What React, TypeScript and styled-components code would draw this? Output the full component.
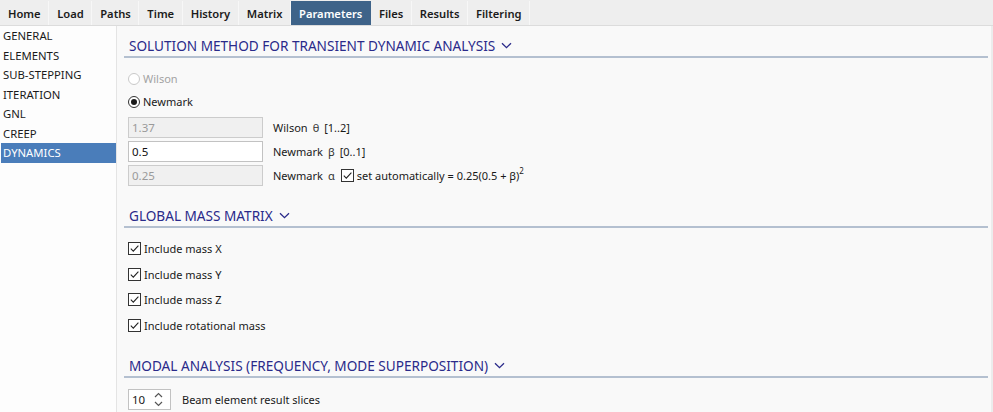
import React from "react";
import styled, { createGlobalStyle, css } from "styled-components";

const Global = createGlobalStyle`
  html, body { margin: 0; padding: 0; background: #f8f8f8; }
  body { font-family: "Noto Sans", "Open Sans", sans-serif; font-size: 11px; color: #1a1a1a; }
  * { box-sizing: border-box; }
`;

const Frame = styled.div`
  width: 993px;
  height: 412px;
  display: flex;
  flex-direction: column;
  overflow: hidden;
  background: #f8f8f8;
`;

const TabBar = styled.div`
  height: 26px;
  display: flex;
  align-items: stretch;
  background: #eeeeee;
  border-bottom: 1px solid #dcdcdc;
  padding-top: 1px;
`;

const Tab = styled.div<{ $active?: boolean }>`
  display: flex;
  align-items: center;
  padding: 0 7.5px 0 8px;
  font-weight: 600;
  font-size: 11.2px;
  color: #1b1b1b;
  border-right: 1px solid #f7f7f7;
  ${(p) =>
    p.$active &&
    css`
      background: #3e6389;
      color: #ffffff;
      border-right-color: #3e6389;
    `}
`;

const Body = styled.div`
  flex: 1;
  display: flex;
  min-height: 0;
`;

const Sidebar = styled.div`
  width: 117px;
  background: #fdfdfd;
  border-right: 1px solid #e4e4e4;
  display: flex;
  flex-direction: column;
`;

const NavItem = styled.div<{ $active?: boolean }>`
  height: 19.5px;
  display: flex;
  align-items: center;
  padding-left: 2px;
  margin-left: 1px;
  font-size: 11.3px;
  color: #1a1a1a;
  ${(p) =>
    p.$active &&
    css`
      background: #4a7dba;
      color: #ffffff;
    `}
`;

const Content = styled.div`
  flex: 1;
  padding: 0 3px 0 7px;
  background: #f9f9f9;
  border-right: 2px solid #ececec;
`;

const SectionHeader = styled.div<{ $top: number }>`
  margin-top: ${(p) => p.$top}px;
  height: 24px;
  display: flex;
  align-items: center;
  gap: 6px;
  padding-left: 5px;
  border-bottom: 2px solid #b4c0d0;
  color: #2a2a8a;
  font-size: 13.6px;
`;

const SectionBody = styled.div<{ $top: number }>`
  padding-left: 4px;
  padding-top: ${(p) => p.$top}px;
  display: flex;
  flex-direction: column;
`;

const OptionRow = styled.div<{ $h: number; $disabled?: boolean }>`
  height: ${(p) => p.$h}px;
  display: flex;
  align-items: center;
  gap: 3px;
  color: ${(p) => (p.$disabled ? "#a3a3a3" : "#1a1a1a")};
`;

const Radio = styled.span<{ $checked?: boolean; $disabled?: boolean }>`
  width: 12px;
  height: 12px;
  border-radius: 50%;
  border: 1px solid ${(p) => (p.$disabled ? "#c9c9c9" : "#333333")};
  background: #ffffff;
  display: inline-flex;
  align-items: center;
  justify-content: center;
  &::after {
    content: "";
    width: 6px;
    height: 6px;
    border-radius: 50%;
    background: ${(p) => (p.$checked ? "#1a1a1a" : "transparent")};
  }
`;

const Fields = styled.div`
  margin-top: 4px;
  display: flex;
  flex-direction: column;
  gap: 3px;
`;

const FieldRow = styled.div`
  display: flex;
  align-items: center;
  height: 21px;
`;

const TextBox = styled.div<{ $disabled?: boolean }>`
  width: 135px;
  height: 21px;
  margin-right: 10px;
  display: flex;
  align-items: center;
  padding-left: 3px;
  font-size: 11.5px;
  border: 1px solid ${(p) => (p.$disabled ? "#cccccc" : "#c2c2c2")};
  background: ${(p) => (p.$disabled ? "#f0f0f0" : "#ffffff")};
  color: ${(p) => (p.$disabled ? "#9a9a9a" : "#111111")};
`;

const Label = styled.span`
  color: #1a1a1a;
  display: inline-flex;
  align-items: center;
  white-space: nowrap;
`;

const Greek = styled.span`
  font-size: 11px;
  margin: 0 5px 0 5px;
  color: #333;
`;

const Sup = styled.sup`
  font-size: 8px;
  vertical-align: 6px;
  line-height: 0;
`;

const CheckBoxBox = styled.span`
  width: 13px;
  height: 13px;
  border: 1px solid #333333;
  background: #ffffff;
  display: inline-flex;
  align-items: center;
  justify-content: center;
  flex: none;
`;

const InlineCheck = styled.span`
  display: inline-flex;
  align-items: center;
  gap: 3px;
  margin-left: 1px;
`;

const CheckRow = styled.div`
  height: 25.5px;
  display: flex;
  align-items: center;
  gap: 3px;
`;

const SpinRow = styled.div`
  display: flex;
  align-items: center;
  gap: 11px;
`;

const Spinner = styled.div`
  width: 43px;
  height: 21px;
  border: 1px solid #c2c2c2;
  background: #ffffff;
  display: flex;
  align-items: center;
  justify-content: space-between;
  padding: 0 7px 0 3px;
  font-size: 11.5px;
`;

const SpinArrows = styled.div`
  display: flex;
  flex-direction: column;
  gap: 3px;
`;

const Chevron = () => (
  <svg width="11" height="7" viewBox="0 0 11 7">
    <path d="M1 1.2 L5.5 5.7 L10 1.2" fill="none" stroke="#2a2a8a" strokeWidth="1.3" />
  </svg>
);

const Check = () => (
  <CheckBoxBox>
    <svg width="11" height="11" viewBox="0 0 11 11">
      <path d="M1.8 5.6 L4.3 8.1 L9.4 2.6" fill="none" stroke="#222" strokeWidth="1.1" />
    </svg>
  </CheckBoxBox>
);

const tabs = ["Home", "Load", "Paths", "Time", "History", "Matrix", "Parameters", "Files", "Results", "Filtering"];
const nav = ["GENERAL", "ELEMENTS", "SUB-STEPPING", "ITERATION", "GNL", "CREEP", "DYNAMICS"];
const masses = ["Include mass X", "Include mass Y", "Include mass Z", "Include rotational mass"];

export default function App() {
  return (
    <Frame>
      <Global />
      <TabBar>
        {tabs.map((t) => (
          <Tab key={t} $active={t === "Parameters"}>
            {t}
          </Tab>
        ))}
      </TabBar>
      <Body>
        <Sidebar>
          {nav.map((n) => (
            <NavItem key={n} $active={n === "DYNAMICS"}>
              {n}
            </NavItem>
          ))}
        </Sidebar>
        <Content>
          <SectionHeader $top={8}>
            SOLUTION METHOD FOR TRANSIENT DYNAMIC ANALYSIS <Chevron />
          </SectionHeader>
          <SectionBody $top={9}>
            <OptionRow $h={23} $disabled>
              <Radio $disabled /> Wilson
            </OptionRow>
            <OptionRow $h={23}>
              <Radio $checked /> Newmark
            </OptionRow>
            <Fields>
              <FieldRow>
                <TextBox $disabled>1.37</TextBox>
                <Label>
                  Wilson<Greek>θ</Greek>[1..2]
                </Label>
              </FieldRow>
              <FieldRow>
                <TextBox>0.5</TextBox>
                <Label>
                  Newmark<Greek>β</Greek>[0..1]
                </Label>
              </FieldRow>
              <FieldRow>
                <TextBox $disabled>0.25</TextBox>
                <Label>
                  Newmark<Greek>α</Greek>
                  <InlineCheck>
                    <Check />
                    <span>
                      set automatically = 0.25(0.5 + β)<Sup>2</Sup>
                    </span>
                  </InlineCheck>
                </Label>
              </FieldRow>
            </Fields>
          </SectionBody>

          <SectionHeader $top={18}>
            GLOBAL MASS MATRIX <Chevron />
          </SectionHeader>
          <SectionBody $top={8}>
            {masses.map((m) => (
              <CheckRow key={m}>
                <Check />
                {m}
              </CheckRow>
            ))}
          </SectionBody>

          <SectionHeader $top={16}>
            MODAL ANALYSIS (FREQUENCY, MODE SUPERPOSITION) <Chevron />
          </SectionHeader>
          <SectionBody $top={11}>
            <SpinRow>
              <Spinner>
                <span>10</span>
                <SpinArrows>
                  <svg width="9" height="6" viewBox="0 0 9 6">
                    <path d="M1 5 L4.5 1.5 L8 5" fill="none" stroke="#555" strokeWidth="1.2" />
                  </svg>
                  <svg width="9" height="6" viewBox="0 0 9 6">
                    <path d="M1 1 L4.5 4.5 L8 1" fill="none" stroke="#555" strokeWidth="1.2" />
                  </svg>
                </SpinArrows>
              </Spinner>
              <Label>Beam element result slices</Label>
            </SpinRow>
          </SectionBody>
        </Content>
      </Body>
    </Frame>
  );
}
